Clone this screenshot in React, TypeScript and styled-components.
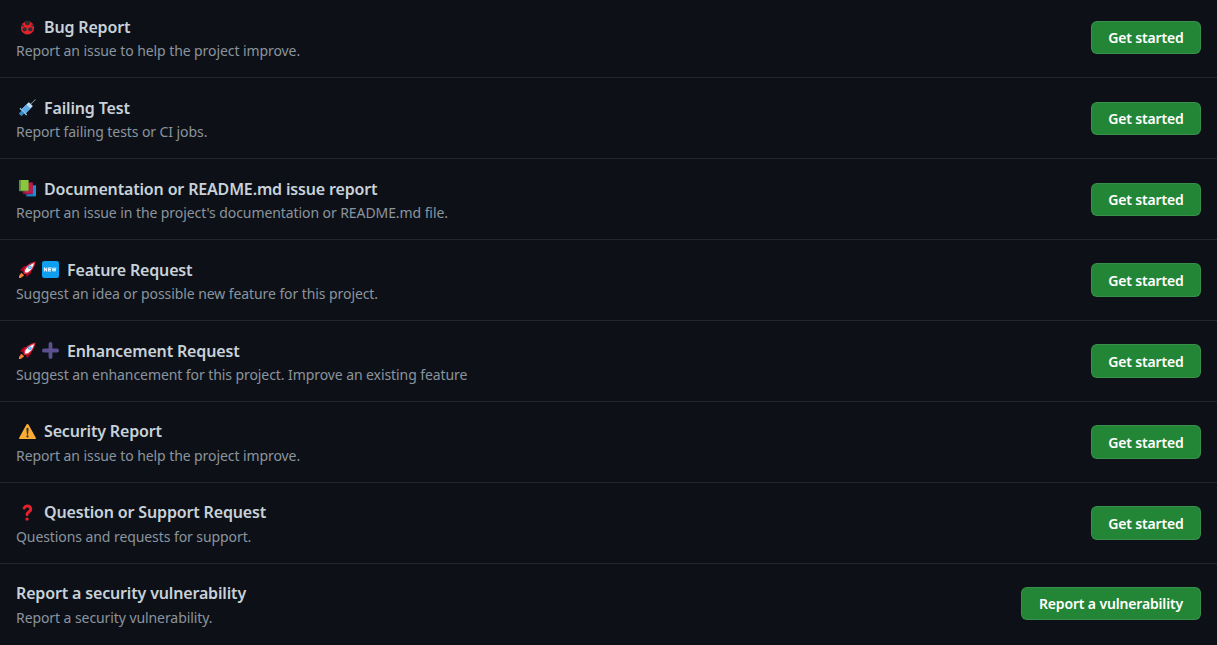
import React from 'react';
import styled, { createGlobalStyle } from 'styled-components';

const GlobalStyle = createGlobalStyle`
  html, body {
    margin: 0;
    height: 100%;
    overflow: hidden;
    background: #0d1117;
  }
  body {
    font-family: "Noto Sans", "Open Sans", "Liberation Sans", sans-serif;
  }
`;

const Page = styled.div`
  height: 645px;
  overflow: hidden;
  background: #0d1117;
`;

// the list is scrolled a little in the reference, rows are not whole pixels tall
const List = styled.ul`
  list-style: none;
  margin: -2.45px 0 0;
  padding: 0;
`;

const Row = styled.li`
  box-sizing: border-box;
  height: 80.9px;
  display: flex;
  align-items: center;
  justify-content: space-between;
  padding: 0 16px;
  border-bottom: 1px solid #21262d;

  &:last-child {
    border-bottom-color: transparent;
  }
`;

const Info = styled.div`
  display: flex;
  flex-direction: column;
  gap: 1.4px;
  padding-top: 1.3px;
`;

const Title = styled.div`
  display: flex;
  align-items: center;
  gap: 8px;
  height: 24px;
  font-size: 16px;
  font-weight: 600;
  letter-spacing: -0.16px;
  color: #c9d1d9;
`;

const Emojis = styled.span`
  display: flex;
  gap: 6px;
  margin-left: 3px;
`;

const Description = styled.div`
  font-size: 14px;
  line-height: 21px;
  letter-spacing: -0.08px;
  color: #8b949e;
`;

const ActionButton = styled.a<{ $width: number }>`
  box-sizing: border-box;
  width: ${p => p.$width}px;
  height: 33.5px;
  padding-top: 0.4px;
  display: flex;
  align-items: center;
  justify-content: center;
  font-size: 14px;
  font-weight: 600;
  letter-spacing: -0.16px;
  color: #ffffff;
  background: #238636;
  border: 1px solid rgba(240, 246, 252, 0.1);
  border-radius: 6px;
`;

const Glyph = styled.svg`
  display: block;
  width: 17px;
  height: 17px;
`;

const Bug = () => (
  <Glyph viewBox="0 0 36 36">
    <circle cx="18" cy="21" r="14" fill="#e8202a" />
    <path fill="#292f33" d="M12 6h12l-1 7-5 3-5-3z" />
    <circle cx="12" cy="24" r="4.500" fill="#292f33" />
    <circle cx="24" cy="24" r="4.500" fill="#292f33" />
    <circle cx="8" cy="16" r="2.200" fill="#292f33" />
    <circle cx="28" cy="16" r="2.200" fill="#292f33" />
  </Glyph>
);

const Syringe = () => (
  <Glyph viewBox="0 0 36 36">
    <g transform="rotate(45 18 18)">
      <rect x="17.300" y="-6" width="1.400" height="16" fill="#99aab5" />
      <rect x="12" y="8" width="12" height="21" rx="1" fill="#bbddf5" />
      <rect x="12" y="15" width="12" height="14" fill="#5dadec" />
      <rect x="8" y="29" width="20" height="3" fill="#88c9f9" />
      <rect x="14" y="32" width="8" height="8" fill="#3b88c3" />
    </g>
  </Glyph>
);

const Books = () => (
  <Glyph viewBox="0 0 36 36">
    <path fill="#1b6ca8" d="M15 11h21v24H17a2 2 0 0 1-2-2z" />
    <path fill="#1c8ed8" d="M19 12h17v21H19z" />
    <path fill="#8e0f3f" d="M8 5h21v25H10a2 2 0 0 1-2-2z" />
    <path fill="#c2184b" d="M12 6h17v22H12z" />
    <path fill="#5c913b" d="M0 0h20v24H2a2 2 0 0 1-2-2z" />
    <path fill="#8cc63f" d="M4 0h16v22H4z" />
  </Glyph>
);

const Rocket = () => (
  <Glyph viewBox="0 0 36 36">
    <path fill="#a0041e" d="M2 19l9-9 6 2-9 10zM17 34l9-9-2-6-10 9z" />
    <path fill="#f4813a" d="M0 32l5-7 6 5-7 6H0z" />
    <path fill="#dd2e44" d="M10 27C7 19 15 5 35 1c-3 20-17 29-25 26z" />
    <path fill="#ffffff" d="M13 24c-2-5 4-13 19-20-4 14-13 22-19 20z" />
    <circle cx="23" cy="13" r="4" fill="#55acee" />
    <circle cx="23" cy="13" r="2.400" fill="#88c9f9" />
  </Glyph>
);

const NewBadge = () => (
  <Glyph viewBox="0 0 36 36">
    <rect x="0" y="0" width="36" height="36" rx="5" fill="#0e9ff0" />
    <path
      fill="#ffffff"
      d="M4 14h2l3 5v-5h2v8H9l-3-5v5H4zM13 14h6v2h-4v1h4v2h-4v1h4v2h-6zM20 14h2l1 5 1.500-5h1.500l1.500 5 1-5h2l-2 8h-2l-1.300-4.500L24.500 22h-2z"
    />
  </Glyph>
);

const Plus = () => (
  <Glyph viewBox="0 0 36 36">
    <path
      fill="#5c5090"
      d="M32 14H22V4a4 4 0 0 0-8 0v10H4a4 4 0 0 0 0 8h10v10a4 4 0 0 0 8 0V22h10a4 4 0 0 0 0-8z"
    />
  </Glyph>
);

const Warning = () => (
  <Glyph viewBox="0 0 36 36">
    <path
      fill="#ffac33"
      d="M2.700 34C.600 34-.300 32.500.700 30.700L15.800 3.300c1-1.800 3.300-1.800 4.300 0l15.200 27.400c1 1.800.1 3.300-2 3.300z"
    />
    <path fill="#31373d" d="M15.700 12.500a2.300 2.300 0 0 1 4.600 0l-.9 11a1.400 1.400 0 0 1-2.800 0z" />
    <circle cx="18" cy="28.500" r="2.400" fill="#31373d" />
  </Glyph>
);

const Question = () => (
  <Glyph viewBox="0 0 36 36">
    <path
      fill="#e6202f"
      d="M17 26a3 3 0 0 1-3-3c0-5 2.500-7 4.800-8.700 1.800-1.400 2.700-2.200 2.700-3.800 0-2-1.500-3-3.500-3-2.300 0-3.500 1.200-4.500 2.800a3 3 0 1 1-5-3.300C10.600 3.100 13.800 1 18 1c5.800 0 10 3.700 10 9.500 0 4.500-2.800 6.700-5 8.300-1.700 1.300-3 2.300-3 4.200a3 3 0 0 1-3 3z"
    />
    <circle cx="17" cy="32" r="3.500" fill="#e6202f" />
  </Glyph>
);

const rows = [
  { icons: [<Bug key="a" />], title: 'Bug Report', text: 'Report an issue to help the project improve.' },
  { icons: [<Syringe key="a" />], title: 'Failing Test', text: 'Report failing tests or CI jobs.' },
  {
    icons: [<Books key="a" />],
    title: 'Documentation or README.md issue report',
    text: "Report an issue in the project's documentation or README.md file.",
  },
  {
    icons: [<Rocket key="a" />, <NewBadge key="b" />],
    title: 'Feature Request',
    text: 'Suggest an idea or possible new feature for this project.',
  },
  {
    icons: [<Rocket key="a" />, <Plus key="b" />],
    title: 'Enhancement Request',
    text: 'Suggest an enhancement for this project. Improve an existing feature',
  },
  { icons: [<Warning key="a" />], title: 'Security Report', text: 'Report an issue to help the project improve.' },
  { icons: [<Question key="a" />], title: 'Question or Support Request', text: 'Questions and requests for support.' },
];

export default function App() {
  return (
    <Page>
      <GlobalStyle />
      <List>
        {rows.map(row => (
          <Row key={row.title}>
            <Info>
              <Title>
                <Emojis>{row.icons}</Emojis>
                {row.title}
              </Title>
              <Description>{row.text}</Description>
            </Info>
            <ActionButton $width={110}>Get started</ActionButton>
          </Row>
        ))}
        <Row>
          <Info>
            <Title>Report a security vulnerability</Title>
            <Description>Report a security vulnerability.</Description>
          </Info>
          <ActionButton $width={180}>Report a vulnerability</ActionButton>
        </Row>
      </List>
    </Page>
  );
}
